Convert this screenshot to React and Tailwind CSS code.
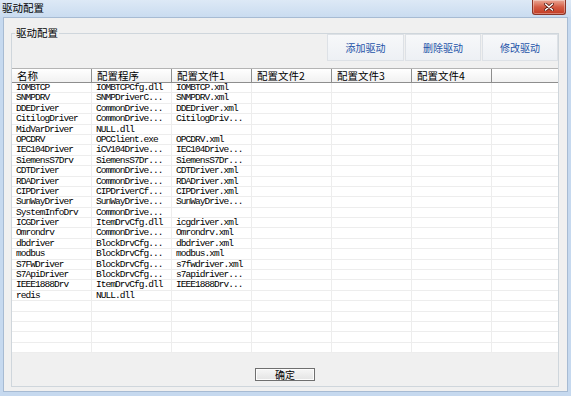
const ROWS = [
  ["IOMBTCP", "IOMBTCPCfg.dll", "IOMBTCP.xml"],
  ["SNMPDRV", "SNMPDriverC...", "SNMPDRV.xml"],
  ["DDEDriver", "CommonDrive...", "DDEDriver.xml"],
  ["CitilogDriver", "CommonDrive...", "CitilogDriv..."],
  ["MidVarDriver", "NULL.dll", ""],
  ["OPCDRV", "OPCClient.exe", "OPCDRV.xml"],
  ["IEC104Driver", "iCV104Drive...", "IEC104Drive..."],
  ["SiemensS7Drv", "SiemensS7Dr...", "SiemensS7Dr..."],
  ["CDTDriver", "CommonDrive...", "CDTDriver.xml"],
  ["RDADriver", "CommonDrive...", "RDADriver.xml"],
  ["CIPDriver", "CIPDriverCf...", "CIPDriver.xml"],
  ["SunWayDriver", "SunWayDrive...", "SunWayDrive..."],
  ["SystemInfoDrv", "CommonDrive...", ""],
  ["ICGDriver", "ItemDrvCfg.dll", "icgdriver.xml"],
  ["Omrondrv", "CommonDrive...", "Omrondrv.xml"],
  ["dbdriver", "BlockDrvCfg...", "dbdriver.xml"],
  ["modbus", "BlockDrvCfg...", "modbus.xml"],
  ["S7FWDriver", "BlockDrvCfg...", "s7fwdriver.xml"],
  ["S7ApiDriver", "BlockDrvCfg...", "s7apidriver..."],
  ["IEEE1888Drv", "ItemDrvCfg.dll", "IEEE1888Drv..."],
  ["redis", "NULL.dll", ""],
  ["", "", ""],
  ["", "", ""],
  ["", "", ""],
  ["", "", ""],
  ["", "", ""],
];

const HEADERS = ["名称", "配置程序", "配置文件1", "配置文件2", "配置文件3", "配置文件4", ""];

function ToolButton({ label, width }) {
  return (
    <button
      type="button"
      className={`flex h-[27px] ${width} items-center justify-center border border-[#dde1e6] bg-gradient-to-b from-[#f7f8fa] to-[#edf0f4] text-[10px] leading-[12px] text-[#2553a8]`}
    >
      {label}
    </button>
  );
}

function CloseButton() {
  return (
    <div className="mr-[5px] flex h-[15px] w-[34px] items-center justify-center rounded-b-[3px] border border-t-0 border-[#8a3426] bg-gradient-to-b from-[#e9a896] via-[#d45b44] to-[#c23a22] shadow-[inset_0_0_0_1px_rgba(255,255,255,0.35)]">
      <svg width="10" height="8" viewBox="0 0 10 8">
        <path d="M1.5 1 L8.5 7 M8.5 1 L1.5 7" stroke="#5a1a10" strokeWidth="3" strokeLinecap="round" />
        <path d="M1.5 1 L8.5 7 M8.5 1 L1.5 7" stroke="#ffffff" strokeWidth="1.6" strokeLinecap="round" />
      </svg>
    </div>
  );
}

export default function App() {
  return (
    <div className="flex h-[396px] w-[571px] flex-col bg-[#c6d9ef] font-['Noto_Sans_CJK_SC',sans-serif]">
      <div className="flex h-[17px] items-start justify-between bg-gradient-to-b from-[#dde9f6] to-[#cadcf0]">
        <span className="ml-[2px] mt-[1px] text-[10.5px] leading-[13px] text-black">驱动配置</span>
        <CloseButton />
      </div>

      <div className="mx-[3px] mb-[4px] flex flex-1 flex-col border border-[#a7bbd3] bg-[#f0f0f0] pb-[4px] pl-[7px] pr-[8px] pt-[15px]">
        <div className="relative flex flex-1 flex-col border border-[#cfd6dc]">
          <span className="absolute -top-[7px] left-[3px] bg-[#f0f0f0] px-[1px] text-[10.5px] leading-[12px] text-black">
            驱动配置
          </span>

          <div className="flex justify-end gap-px">
            <ToolButton label="添加驱动" width="w-[77px]" />
            <ToolButton label="删除驱动" width="w-[76px]" />
            <ToolButton label="修改驱动" width="w-[76px]" />
          </div>

          <div className="mt-[7px]">
            <div className="grid h-[15px] grid-cols-[80px_80px_80px_80px_80px_80px_1fr] border-b border-t border-b-[#8e8e8e] border-t-[#b4b4b4] bg-gradient-to-b from-[#ffffff] to-[#f1f1f1]">
              {HEADERS.map((h, i) => (
                <div
                  key={i}
                  className={`flex items-center pl-[5px] text-[10.5px] leading-[12px] text-black ${i < 6 ? "border-r border-r-[#8e8e8e]" : ""}`}
                >
                  {h}
                </div>
              ))}
            </div>

            {ROWS.map((r, ri) => (
              <div
                key={ri}
                className="grid h-[10.4px] grid-cols-[80px_80px_80px_80px_80px_80px_1fr] border-b border-[#ededed] bg-white font-['Liberation_Mono',monospace] text-[9.5px] leading-[10px] tracking-[-0.95px] text-black"
              >
                {[r[0], r[1], r[2], "", "", "", ""].map((c, ci) => (
                  <div
                    key={ci}
                    className={`overflow-hidden whitespace-nowrap pl-[4px] ${ci < 6 ? "border-r border-[#ededed]" : ""}`}
                  >
                    {c}
                  </div>
                ))}
              </div>
            ))}
          </div>

          <div className="flex flex-1 items-end justify-center pb-[5px]">
            <button
              type="button"
              className="flex h-[13px] w-[60px] items-center justify-center border border-[#6f6f6f] bg-gradient-to-b from-[#f6f6f6] to-[#e4e4e4] text-[10px] leading-[11px] text-black shadow-[inset_0_0_0_1px_#fcfcfc]"
            >
              确定
            </button>
          </div>
        </div>
      </div>
    </div>
  );
}
